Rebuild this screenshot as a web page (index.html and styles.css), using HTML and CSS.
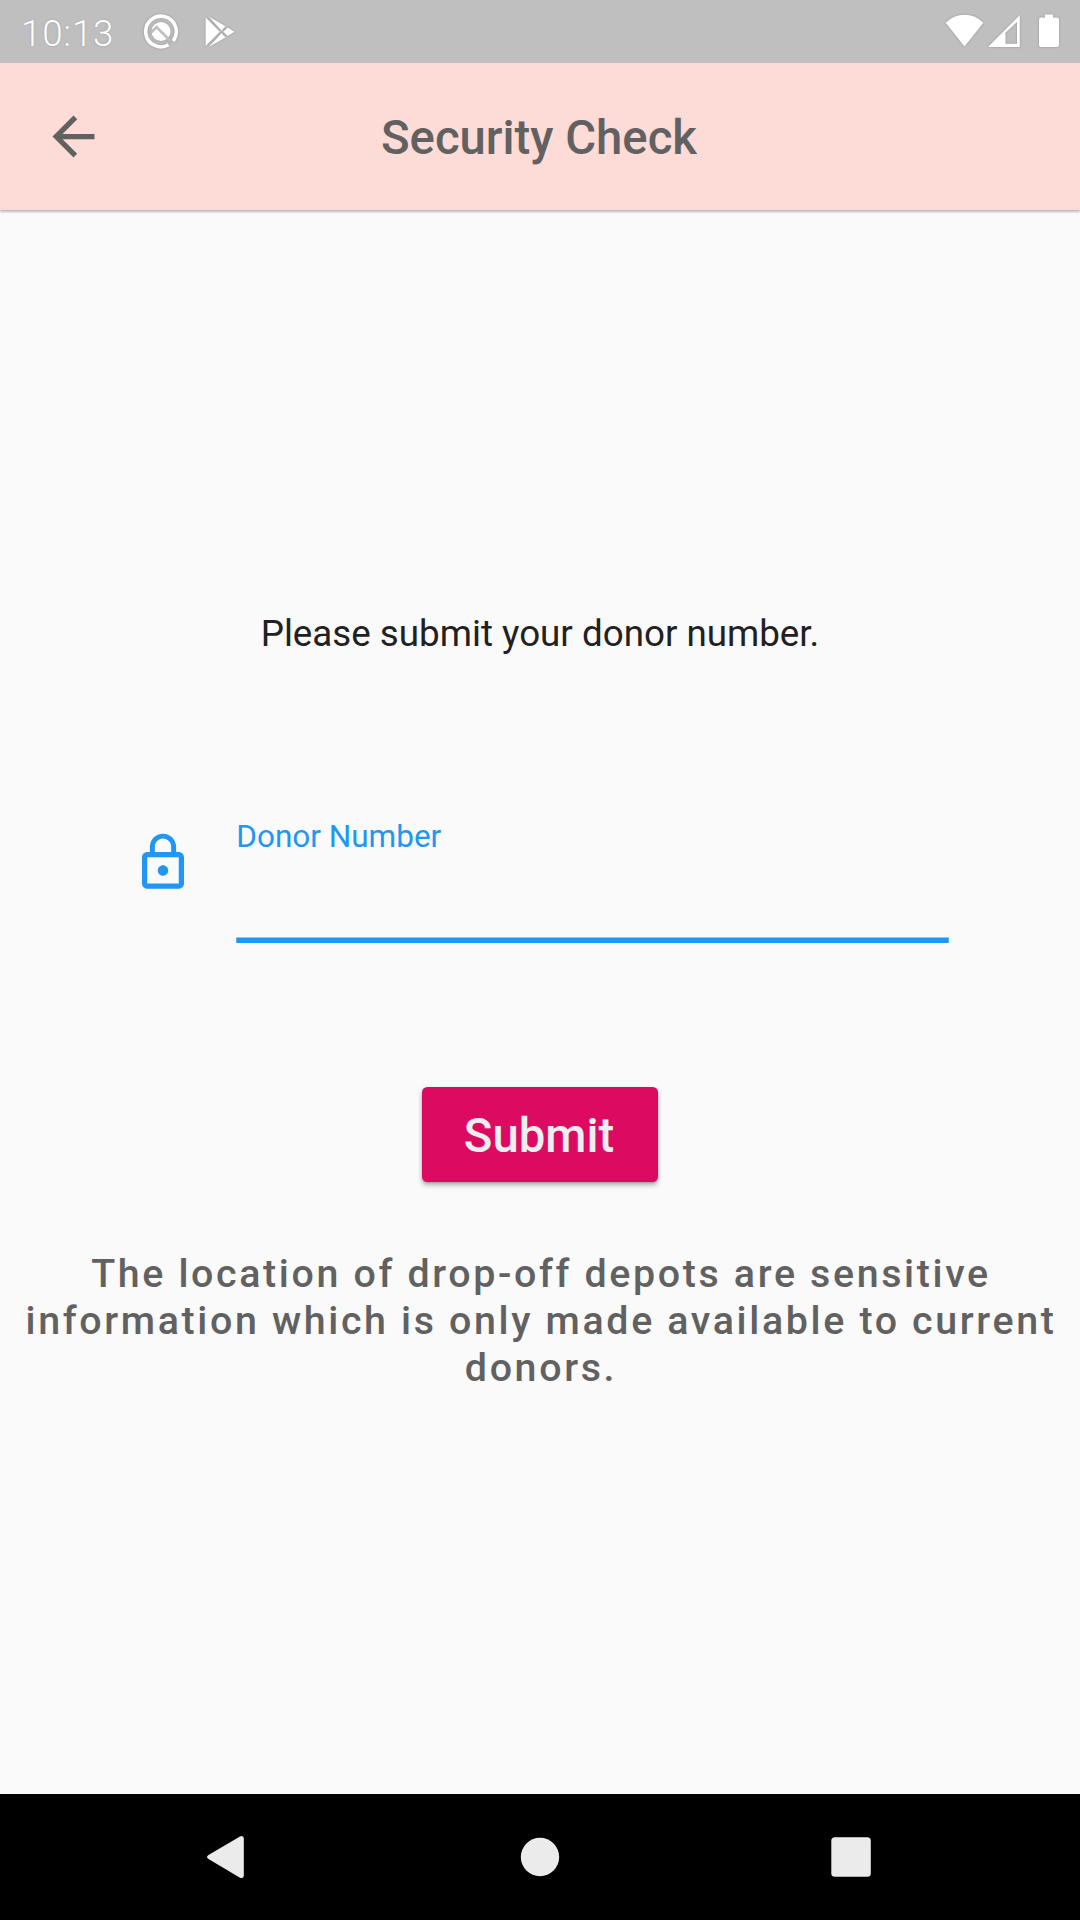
FILE: index.html
```html
<!DOCTYPE html>
<html lang="en">
<head>
<meta charset="utf-8">
<title>Security Check</title>
<link rel="stylesheet" href="styles.css">
</head>
<body>
<div class="screen">
  <div class="status-bar">
    <span class="clock">10:13</span>
    <svg class="status-q" width="38" height="38" viewBox="0 0 38 38">
      <path d="M26.600 32.800A15.300 15.300 0 1 1 31 29" fill="none" stroke="#fff" stroke-width="3.600"/>
      <circle cx="19" cy="19.500" r="9.600" fill="#fff"/>
      <path d="M8.500 21L14.500 15L28.500 29" fill="none" stroke="#bfbfbf" stroke-width="2.600"/>
    </svg>
    <svg class="status-play" width="31" height="32" viewBox="0 0 31 32">
      <path d="M0.6 1.5L14.8 15.7L0.6 30zM3.8 .6L20.6 10.2L16.5 14.4zM3.8 31L20.6 21.4L16.5 17.2zM22.7 11.5L29.6 15.7L22.7 20L18.3 15.7z" fill="#fff"/>
    </svg>
    <div class="status-right">
      <svg class="wifi" width="39" height="34" viewBox="0 0 39 34"><path d="M.6 8.8Q8.5 .7 19.5 .7T38.4 8.8L19.5 32.5z" fill="#fff"/></svg>
      <svg class="signal" width="32" height="33" viewBox="0 0 32 33"><path fill-rule="evenodd" d="M0 33L31.8 1V33zM17.500 18.700V29.800H29V8z" fill="#fff"/></svg>
      <svg class="battery" width="20" height="33" viewBox="0 0 20 33"><path d="M6 .5h8v3h4q2 0 2 2V31q0 2-2 2H2q-2 0-2-2V5.500q0-2 2-2h4z" fill="#fff"/></svg>
    </div>
  </div>
  <header class="app-bar">
    <svg class="back" viewBox="0 0 24 24"><path d="M20 11H7.830l5.590-5.590L12 4l-8 8 8 8 1.410-1.410L7.830 13H20v-2z" fill="#616161"/></svg>
    <h1 class="title">Security Check</h1>
  </header>
  <main class="content">
    <p class="prompt">Please submit your donor number.</p>
    <div class="field">
      <svg class="lock" width="64" height="64" viewBox="0 0 64 64"><path transform="translate(.5 0) scale(2.625)" fill="#2196f3" d="M12 17c1.100 0 2-.9 2-2s-.9-2-2-2-2 .9-2 2 .9 2 2 2zm6-9h-1V6c0-2.760-2.240-5-5-5S7 3.240 7 6v2H6c-1.100 0-2 .9-2 2v10c0 1.100.9 2 2 2h12c1.100 0 2-.9 2-2V10c0-1.100-.9-2-2-2zM8.900 6c0-1.710 1.390-3.100 3.100-3.100s3.100 1.390 3.100 3.100v2H8.900V6zM18 20H6V10h12v10z"/></svg>
      <div class="input">
        <label class="label">Donor Number</label>
        <svg class="underline" width="713" height="7" viewBox="0 0 713 7"><path d="M.25 1.400H712.750V7H.25z" fill="#2196f3"/></svg>
      </div>
    </div>
    <button class="submit">Submit</button>
    <p class="note">The location of drop-off depots are sensitive information which is only made available to current donors.</p>
  </main>
  <nav class="nav-bar">
    <svg width="1080" height="126" viewBox="0 0 1080 126" fill="#ebebeb">
      <path d="M208.500 61L240 42.400Q243.700 41 243.800 44.500V81.500Q243.700 85 240 83.700L208.500 65Q205.500 63 208.500 61z"/>
      <circle cx="540" cy="63" r="19.200"/>
      <rect x="831.300" y="43.300" width="39.500" height="39.500" rx="3.500"/>
    </svg>
  </nav>
</div>
</body>
</html>
```
FILE: styles.css
```css
* { box-sizing: border-box; }
body { margin: 0; font-family: Roboto, "Noto Sans", sans-serif; }
h1, p { margin: 0; }
svg { display: block; flex: none; }
.screen { width: 1080px; height: 1920px; display: flex; flex-direction: column; background: #fafafa; overflow: hidden; }
.status-bar { height: 63px; flex: none; display: flex; align-items: flex-start; background: #bfbfbf; padding-left: 21px; padding-right: 21px; }
.status-bar svg { filter: drop-shadow(0 0 1px rgba(0,0,0,.25)); }
.clock { width: 121px; font-size: 36.750px; font-weight: 300; line-height: 44px; padding-top: 12px; letter-spacing: .8px; color: #fff; white-space: nowrap; text-shadow: 0 0 2px rgba(0,0,0,.2); }
.status-q { margin-top: 12px; }
.status-play { margin: 16px 0 0 24.500px; }
.status-right { display: flex; margin-left: auto; }
.wifi { margin-top: 14px; margin-right: 4px; }
.signal { margin-top: 14px; margin-right: 19px; }
.battery { margin-top: 14px; }
.app-bar { height: 147px; flex: none; display: grid; grid-template-columns: 63px 1fr 63px; align-items: center; padding: 0 42px; background: #fddbd6; box-shadow: 0 1.500px 2px rgba(0,0,0,.25); }
.back { width: 63px; height: 63px; }
.title { text-align: center; font-size: 47.250px; font-weight: 500; line-height: 56px; padding: 2px 2px 0 0; color: #616161; }
.content { flex: 1; display: flex; flex-direction: column; align-items: center; }
.prompt { margin-top: 402px; font-size: 36.750px; line-height: 44px; color: #212121; }
.field { width: 817.500px; margin-top: 161px; height: 126px; display: flex; gap: 41px; }
.lock { margin-top: 14px; }
.input { flex: 1; display: flex; flex-direction: column; justify-content: space-between; }
.label { font-size: 31.500px; line-height: 40px; color: #2196f3; }
.submit { width: 236.250px; height: 94.500px; margin-top: 144.250px; padding: 3px 2px 0 0; border: 0; border-radius: 5.250px; background: #dd0a62; color: #eee; font: 500 47.250px/56px Roboto, sans-serif; box-shadow: 0 3px 5px rgba(0,0,0,.3), 0 1px 2px rgba(0,0,0,.12); }
.note { width: 1044px; padding-left: 2px; margin-top: 68.250px; font-size: 39.375px; font-weight: 500; line-height: 47px; letter-spacing: 2.640px; text-align: center; color: #616161; }
.nav-bar { height: 126px; flex: none; background: #000; }
```
